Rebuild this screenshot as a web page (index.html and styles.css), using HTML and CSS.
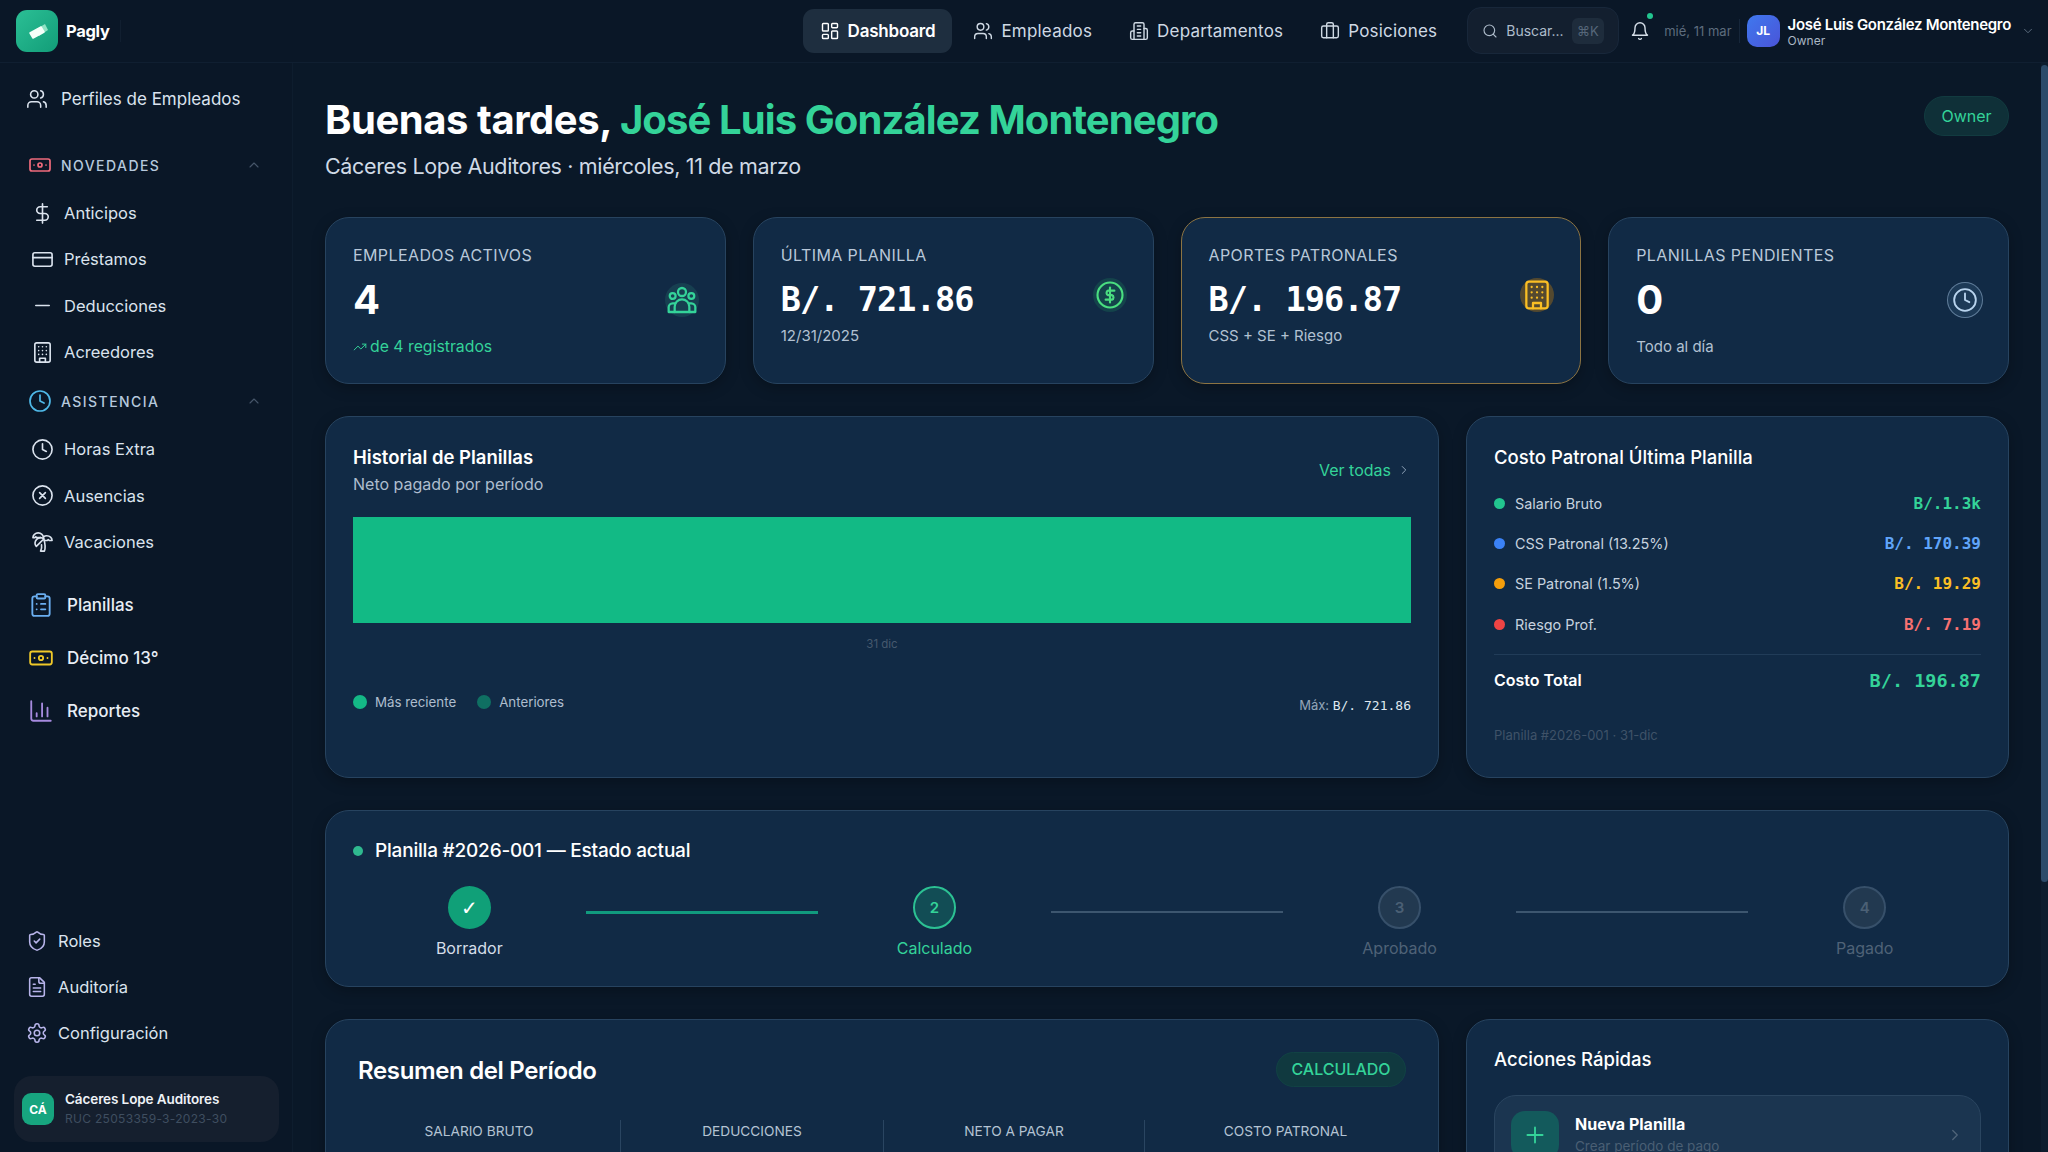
FILE: index.html
```html
<!DOCTYPE html>
<html lang="es">
<head>
  <meta charset="UTF-8" />
  <title>Pagly - Dashboard</title>
  <link rel="stylesheet" href="styles.css">
</head>
<body>
  <svg class="sprite" xmlns="http://www.w3.org/2000/svg">
    <symbol id="i-users" viewBox="0 0 24 24"><path d="M16 21v-2a4 4 0 0 0-4-4H6a4 4 0 0 0-4 4v2"/><circle cx="9" cy="7" r="4"/><path d="M22 21v-2a4 4 0 0 0-3-3.87"/><path d="M16 3.13a4 4 0 0 1 0 7.75"/></symbol>
    <symbol id="i-money" viewBox="0 0 24 24"><rect x="2" y="6" width="20" height="12" rx="2"/><circle cx="12" cy="12" r="2"/><path d="M6 12h.01M18 12h.01"/></symbol>
    <symbol id="i-up" viewBox="0 0 24 24"><path d="m18 15-6-6-6 6"/></symbol>
    <symbol id="i-down" viewBox="0 0 24 24"><path d="m6 9 6 6 6-6"/></symbol>
    <symbol id="i-right" viewBox="0 0 24 24"><path d="m9 18 6-6-6-6"/></symbol>
    <symbol id="i-dollar" viewBox="0 0 24 24"><path d="M12 2v20"/><path d="M17 5H9.5a3.5 3.5 0 0 0 0 7h5a3.5 3.5 0 0 1 0 7H6"/></symbol>
    <symbol id="i-card" viewBox="0 0 24 24"><rect x="2" y="5" width="20" height="14" rx="2"/><path d="M2 10h20"/></symbol>
    <symbol id="i-minus" viewBox="0 0 24 24"><path d="M5 12h14"/></symbol>
    <symbol id="i-building" viewBox="0 0 24 24"><rect x="4" y="2" width="16" height="20" rx="2"/><path d="M9 22v-4h6v4"/><path d="M8 6h.01M12 6h.01M16 6h.01M8 10h.01M12 10h.01M16 10h.01M8 14h.01M12 14h.01M16 14h.01"/></symbol>
    <symbol id="i-clock" viewBox="0 0 24 24"><circle cx="12" cy="12" r="10"/><path d="M12 6v6l4 2"/></symbol>
    <symbol id="i-x" viewBox="0 0 24 24"><circle cx="12" cy="12" r="10"/><path d="m15 9-6 6M9 9l6 6"/></symbol>
    <symbol id="i-palm" viewBox="0 0 24 24"><path d="M13 8c0-2.76-2.46-5-5.5-5S2 5.24 2 8h2l1-1 1 1h4"/><path d="M13 7.14A5.82 5.82 0 0 1 16.5 6c3.04 0 5.5 2.24 5.5 5h-3l-1-1-1 1h-3"/><path d="M5.89 9.71c-2.15 2.15-2.3 5.47-.35 7.43l4.24-4.25.7-.7.71-.71 2.12-2.12c-1.95-1.96-5.27-1.8-7.42.35"/><path d="M11 15.5c.5 2.5-.17 4.5-1 6.5h4c2-5.5-.5-12-1-14"/></symbol>
    <symbol id="i-clipboard" viewBox="0 0 24 24"><rect x="8" y="2" width="8" height="4" rx="1"/><path d="M16 4h2a2 2 0 0 1 2 2v14a2 2 0 0 1-2 2H6a2 2 0 0 1-2-2V6a2 2 0 0 1 2-2h2"/><path d="M12 11h4M12 16h4M8 11h.01M8 16h.01"/></symbol>
    <symbol id="i-chart" viewBox="0 0 24 24"><path d="M3 3v16a2 2 0 0 0 2 2h16"/><path d="M18 17V9M13 17V5M8 17v-3"/></symbol>
    <symbol id="i-shield" viewBox="0 0 24 24"><path d="M20 13c0 5-3.5 7.5-7.66 8.95a1 1 0 0 1-.67-.01C7.5 20.5 4 18 4 13V6a1 1 0 0 1 1-1c2 0 4.5-1.2 6.24-2.72a1.17 1.17 0 0 1 1.52 0C14.51 3.81 17 5 19 5a1 1 0 0 1 1 1z"/><path d="m9 12 2 2 4-4"/></symbol>
    <symbol id="i-file" viewBox="0 0 24 24"><path d="M15 2H6a2 2 0 0 0-2 2v16a2 2 0 0 0 2 2h12a2 2 0 0 0 2-2V7Z"/><path d="M14 2v4a2 2 0 0 0 2 2h4"/><path d="M10 9H8M16 13H8M16 17H8"/></symbol>
    <symbol id="i-gear" viewBox="0 0 24 24"><path d="M12.22 2h-.44a2 2 0 0 0-2 2v.18a2 2 0 0 1-1 1.73l-.43.25a2 2 0 0 1-2 0l-.15-.08a2 2 0 0 0-2.73.73l-.22.38a2 2 0 0 0 .73 2.73l.15.1a2 2 0 0 1 1 1.72v.51a2 2 0 0 1-1 1.74l-.15.09a2 2 0 0 0-.73 2.73l.22.38a2 2 0 0 0 2.73.73l.15-.08a2 2 0 0 1 2 0l.43.25a2 2 0 0 1 1 1.73V20a2 2 0 0 0 2 2h.44a2 2 0 0 0 2-2v-.18a2 2 0 0 1 1-1.73l.43-.25a2 2 0 0 1 2 0l.15.08a2 2 0 0 0 2.73-.73l.22-.39a2 2 0 0 0-.73-2.73l-.15-.08a2 2 0 0 1-1-1.74v-.5a2 2 0 0 1 1-1.74l.15-.09a2 2 0 0 0 .73-2.73l-.22-.38a2 2 0 0 0-2.73-.73l-.15.08a2 2 0 0 1-2 0l-.43-.25a2 2 0 0 1-1-1.73V4a2 2 0 0 0-2-2z"/><circle cx="12" cy="12" r="3"/></symbol>
    <symbol id="i-dash" viewBox="0 0 24 24"><rect x="3" y="3" width="7" height="9" rx="1"/><rect x="14" y="3" width="7" height="5" rx="1"/><rect x="14" y="12" width="7" height="9" rx="1"/><rect x="3" y="16" width="7" height="5" rx="1"/></symbol>
    <symbol id="i-dept" viewBox="0 0 24 24"><path d="M6 22V4a2 2 0 0 1 2-2h8a2 2 0 0 1 2 2v18Z"/><path d="M6 12H4a2 2 0 0 0-2 2v6a2 2 0 0 0 2 2h2"/><path d="M18 9h2a2 2 0 0 1 2 2v9a2 2 0 0 1-2 2h-2"/><path d="M10 6h4M10 10h4M10 14h4M10 18h4"/></symbol>
    <symbol id="i-case" viewBox="0 0 24 24"><path d="M16 20V4a2 2 0 0 0-2-2h-4a2 2 0 0 0-2 2v16"/><rect x="2" y="6" width="20" height="14" rx="2"/></symbol>
    <symbol id="i-search" viewBox="0 0 24 24"><circle cx="11" cy="11" r="8"/><path d="m21 21-4.3-4.3"/></symbol>
    <symbol id="i-bell" viewBox="0 0 24 24"><path d="M6 8a6 6 0 0 1 12 0c0 7 3 9 3 9H3s3-2 3-9"/><path d="M10.3 21a1.94 1.94 0 0 0 3.4 0"/></symbol>
    <symbol id="i-trend" viewBox="0 0 24 24"><path d="m22 7-8.5 8.5-5-5L2 17"/><path d="M16 7h6v6"/></symbol>
    <symbol id="i-group" viewBox="0 0 24 24"><circle cx="12" cy="6" r="3"/><circle cx="5" cy="9" r="2.2"/><circle cx="19" cy="9" r="2.2"/><path d="M6.5 21v-4a5.5 5.5 0 0 1 11 0v4Z"/><path d="M6.5 21H2v-3.5a3 3 0 0 1 3-3h2M17.5 21H22v-3.5a3 3 0 0 0-3-3h-2"/></symbol>
    <symbol id="i-coin" viewBox="0 0 24 24"><circle cx="12" cy="12" r="10"/><path d="M12 6v12"/><path d="M15.5 8.5H10.5a1.9 1.9 0 0 0 0 3.6h3a1.9 1.9 0 0 1 0 3.6H8.500"/></symbol>
    <symbol id="i-plus" viewBox="0 0 24 24"><path d="M5 12h14M12 5v14"/></symbol>
  </svg>

  <header class="topbar">
    <div class="brand">
      <div class="brand-logo">
        <svg viewBox="0 0 42 42" width="42" height="42">
          <path d="M19 20l10-6 3 6-9 6z" fill="#8fe3c4"/>
          <path d="M14 23l11-6 3 5-11 6z" fill="#f4fff9" stroke="#f4fff9" stroke-width="1.500" stroke-linejoin="round"/>
        </svg>
      </div>
      <span class="brand-name">Pagly</span>
    </div>
    <nav class="topnav">
      <a class="topnav-link active"><svg class="ic ic-20"><use href="#i-dash"/></svg>Dashboard</a>
      <a class="topnav-link"><svg class="ic ic-20"><use href="#i-users"/></svg>Empleados</a>
      <a class="topnav-link"><svg class="ic ic-20"><use href="#i-dept"/></svg>Departamentos</a>
      <a class="topnav-link"><svg class="ic ic-20"><use href="#i-case"/></svg>Posiciones</a>
    </nav>
    <div class="topbar-right">
      <div class="search">
        <svg class="ic ic-16"><use href="#i-search"/></svg>
        <span>Buscar...</span>
        <kbd>⌘K</kbd>
      </div>
      <div class="bell">
        <svg class="ic ic-20"><use href="#i-bell"/></svg>
        <span class="bell-dot"></span>
      </div>
      <span class="today">mié, 11 mar</span>
      <div class="user">
        <div class="user-avatar">JL</div>
        <div class="user-info">
          <div class="user-name">José Luis González Montenegro</div>
          <div class="user-role">Owner</div>
        </div>
        <svg class="ic ic-14 dim"><use href="#i-down"/></svg>
      </div>
    </div>
  </header>

  <div class="layout">
    <aside class="sidebar">
      <div class="side-top">
        <a class="side-link side-first"><svg class="ic ic-22"><use href="#i-users"/></svg>Perfiles de Empleados</a>

        <div class="side-section">
          <svg class="ic ic-24 red"><use href="#i-money"/></svg>
          <span>NOVEDADES</span>
          <svg class="ic ic-16 chev"><use href="#i-up"/></svg>
        </div>
        <a class="side-sub"><svg class="ic ic-23"><use href="#i-dollar"/></svg>Anticipos</a>
        <a class="side-sub"><svg class="ic ic-23"><use href="#i-card"/></svg>Préstamos</a>
        <a class="side-sub"><svg class="ic ic-23"><use href="#i-minus"/></svg>Deducciones</a>
        <a class="side-sub"><svg class="ic ic-23"><use href="#i-building"/></svg>Acreedores</a>

        <div class="side-section second">
          <svg class="ic ic-24 sky"><use href="#i-clock"/></svg>
          <span>ASISTENCIA</span>
          <svg class="ic ic-16 chev"><use href="#i-up"/></svg>
        </div>
        <a class="side-sub"><svg class="ic ic-23"><use href="#i-clock"/></svg>Horas Extra</a>
        <a class="side-sub"><svg class="ic ic-23"><use href="#i-x"/></svg>Ausencias</a>
        <a class="side-sub"><svg class="ic ic-23"><use href="#i-palm"/></svg>Vacaciones</a>

        <div class="side-main">
          <a class="side-big"><svg class="ic ic-26 blue"><use href="#i-clipboard"/></svg>Planillas</a>
          <a class="side-big"><svg class="ic ic-26 yellow"><use href="#i-money"/></svg>Décimo 13°</a>
          <a class="side-big"><svg class="ic ic-26 purple"><use href="#i-chart"/></svg>Reportes</a>
        </div>
      </div>

      <div class="side-bottom">
        <a class="side-low"><svg class="ic ic-22 lilac"><use href="#i-shield"/></svg>Roles</a>
        <a class="side-low"><svg class="ic ic-22 lilac"><use href="#i-file"/></svg>Auditoría</a>
        <a class="side-low"><svg class="ic ic-22 lilac"><use href="#i-gear"/></svg>Configuración</a>
        <div class="company">
          <div class="company-avatar">CÁ</div>
          <div>
            <div class="company-name">Cáceres Lope Auditores</div>
            <div class="company-ruc">RUC 25053359-3-2023-30</div>
          </div>
        </div>
      </div>
    </aside>

    <main class="content">
      <div class="page-head">
        <div>
          <h1>Buenas tardes, <span class="accent">José Luis González Montenegro</span></h1>
          <p class="page-sub">Cáceres Lope Auditores · miércoles, 11 de marzo</p>
        </div>
        <span class="owner-pill">Owner</span>
      </div>

      <div class="stack">
        <section class="stats">
          <div class="card stat">
            <div class="stat-label">EMPLEADOS ACTIVOS</div>
            <div class="stat-row">
              <div class="stat-value">4</div>
              <span class="stat-icon s-green"><svg class="ic ic-32"><use href="#i-group"/></svg></span>
            </div>
            <div class="stat-sub green"><svg class="ic ic-14"><use href="#i-trend"/></svg> de 4 registrados</div>
          </div>
          <div class="card stat">
            <div class="stat-label">ÚLTIMA PLANILLA</div>
            <div class="stat-row">
              <div class="stat-value mono">B/. 721.86</div>
              <span class="stat-icon s-lime"><svg class="ic ic-30"><use href="#i-coin"/></svg></span>
            </div>
            <div class="stat-sub">12/31/2025</div>
          </div>
          <div class="card stat stat-gold">
            <div class="stat-label">APORTES PATRONALES</div>
            <div class="stat-row">
              <div class="stat-value mono">B/. 196.87</div>
              <span class="stat-icon s-gold"><svg class="ic ic-32"><use href="#i-building"/></svg></span>
            </div>
            <div class="stat-sub">CSS + SE + Riesgo</div>
          </div>
          <div class="card stat">
            <div class="stat-label">PLANILLAS PENDIENTES</div>
            <div class="stat-row">
              <div class="stat-value">0</div>
              <span class="stat-icon s-slate"><svg class="ic ic-26"><use href="#i-clock"/></svg></span>
            </div>
            <div class="stat-sub">Todo al día</div>
          </div>
        </section>

        <section class="two-col">
          <div class="card chart-card">
            <div class="card-head">
              <div>
                <h2 class="card-title strong">Historial de Planillas</h2>
                <p class="card-sub">Neto pagado por período</p>
              </div>
              <a class="see-all">Ver todas <svg class="ic ic-14"><use href="#i-right"/></svg></a>
            </div>
            <div class="chart-bar"></div>
            <div class="chart-label">31 dic</div>
            <div class="chart-foot">
              <div class="legend">
                <span class="legend-dot recent"></span>Más reciente
                <span class="legend-dot older"></span>Anteriores
              </div>
              <div class="chart-max">Máx: <span class="mono">B/. 721.86</span></div>
            </div>
          </div>

          <div class="card cost-card">
            <h2 class="card-title">Costo Patronal Última Planilla</h2>
            <div class="cost-rows">
              <div class="cost-row"><span class="cost-dot bg-green"></span>Salario Bruto<span class="cost-val mono green">B/.1.3k</span></div>
              <div class="cost-row"><span class="cost-dot bg-blue"></span>CSS Patronal (13.25%)<span class="cost-val mono c-blue">B/. 170.39</span></div>
              <div class="cost-row"><span class="cost-dot bg-amber"></span>SE Patronal (1.5%)<span class="cost-val mono c-amber">B/. 19.29</span></div>
              <div class="cost-row"><span class="cost-dot bg-red"></span>Riesgo Prof.<span class="cost-val mono c-red">B/. 7.19</span></div>
            </div>
            <div class="cost-total">
              <span>Costo Total</span>
              <span class="mono green">B/. 196.87</span>
            </div>
            <div class="cost-note">Planilla #2026-001 · 31-dic</div>
          </div>
        </section>

        <section class="card status-card">
          <div class="status-title"><span class="status-dot"></span>Planilla #2026-001 — Estado actual</div>
          <div class="steps">
            <div class="step done"><div class="step-circle">✓</div><div class="step-label">Borrador</div></div>
            <div class="step-line on"></div>
            <div class="step current"><div class="step-circle">2</div><div class="step-label">Calculado</div></div>
            <div class="step-line"></div>
            <div class="step todo"><div class="step-circle">3</div><div class="step-label">Aprobado</div></div>
            <div class="step-line"></div>
            <div class="step todo"><div class="step-circle">4</div><div class="step-label">Pagado</div></div>
          </div>
        </section>

        <section class="two-col">
          <div class="card summary-card">
            <div class="summary-head">
              <h2>Resumen del Período</h2>
              <span class="summary-pill">CALCULADO</span>
            </div>
            <div class="summary-grid">
              <div class="summary-col">SALARIO BRUTO</div>
              <div class="summary-col">DEDUCCIONES</div>
              <div class="summary-col">NETO A PAGAR</div>
              <div class="summary-col">COSTO PATRONAL</div>
            </div>
          </div>

          <div class="card actions-card">
            <h2 class="card-title">Acciones Rápidas</h2>
            <a class="action">
              <span class="action-icon"><svg class="ic ic-26"><use href="#i-plus"/></svg></span>
              <span class="action-text">
                <span class="action-name">Nueva Planilla</span>
                <span class="action-sub">Crear período de pago</span>
              </span>
              <svg class="ic ic-18 action-arrow"><use href="#i-right"/></svg>
            </a>
          </div>
        </section>
      </div>

      <div class="scroll-track"><div class="scroll-thumb"></div></div>
    </main>
  </div>
</body>
</html>
```

FILE: styles.css
```css
* {
  box-sizing: border-box;
}
html, body {
  height: 100%;
}
body {
  margin: 0;
  background-color: #0a1828;
  color: #fff;
  font-family: 'Inter', 'Liberation Sans', sans-serif;
  font-size: 15px;
  overflow: hidden;
  display: flex;
  flex-direction: column;
}
h1, h2, p {
  margin: 0;
}
.sprite {
  display: none;
}
.mono {
  font-family: 'DejaVu Sans Mono', 'Liberation Mono', monospace;
}

/* icons */
.ic {
  fill: none;
  stroke: currentColor;
  stroke-width: 1.7;
  stroke-linecap: round;
  stroke-linejoin: round;
  flex: none;
}
.ic-14 { width: 14px; height: 14px; }
.ic-16 { width: 16px; height: 16px; }
.ic-18 { width: 18px; height: 18px; }
.ic-20 { width: 20px; height: 20px; }
.ic-22 { width: 22px; height: 22px; }
.ic-23 { width: 23px; height: 23px; }
.ic-24 { width: 24px; height: 24px; }
.ic-26 { width: 26px; height: 26px; }
.ic-30 { width: 30px; height: 30px; }
.ic-32 { width: 32px; height: 32px; }
.red { color: #f06b7c; }
.sky { color: #4fb9e8; }
.blue { color: #6aaef0; }
.yellow { color: #f0c929; }
.purple { color: #a78bdf; }
.lilac { color: #b7b4ea; }
.dim { color: #5b6b7d; }
.green { color: #34d399; }

/* top bar */
.topbar {
  height: 63px;
  flex: none;
  display: flex;
  align-items: center;
  padding: 0 13px 1px 16px;
  background-color: #0a1727;
  border-bottom: 1px solid #101f31;
  position: relative;
}
.brand {
  display: flex;
  align-items: center;
  gap: 8px;
}
.brand-logo {
  width: 42px;
  height: 42px;
  border-radius: 11px;
  background: linear-gradient(135deg, #2bbf95, #129d78);
}
.brand-name {
  font-size: 16.500px;
  line-height: 22px;
  font-weight: 700;
  letter-spacing: -0.3px;
  padding-right: 10px;
  border-right: 1px solid #111f30;
}
.topnav {
  display: flex;
  align-items: center;
  gap: 5px;
  margin-left: 682px;
}
.topnav-link {
  display: flex;
  align-items: center;
  gap: 8px;
  height: 44px;
  padding: 0 16px;
  border-radius: 11px;
  color: #cfd9e4;
  font-size: 17px;
  letter-spacing: 0.2px;
}
.topnav-link.active {
  padding: 0 17px;
  background-color: #1e2e3f;
  color: #fff;
  font-weight: 600;
  letter-spacing: -0.2px;
}
.topbar-right {
  display: flex;
  align-items: center;
  margin-left: auto;
}
.search {
  width: 152px;
  height: 47px;
  display: flex;
  align-items: center;
  gap: 8px;
  padding: 0 14px;
  background-color: #131f2f;
  border: 1px solid #18273a;
  border-radius: 14px;
  font-size: 14px;
  color: #aebccb;
}
.search kbd {
  margin-left: auto;
  width: 37px;
  height: 26px;
  line-height: 26px;
  text-align: center;
  border-radius: 6px;
  background-color: #1e2c3c;
  color: #56677a;
  font-family: 'Inter', sans-serif;
  font-size: 13px;
}
.bell {
  position: relative;
  margin: 0 14px 0 11px;
  display: flex;
  color: #d5dee8;
}
.bell-dot {
  position: absolute;
  right: -3px;
  top: -8px;
  width: 6px;
  height: 6px;
  border-radius: 50%;
  background-color: #22c58f;
}
.today {
  font-size: 13px;
  color: #5d6c7d;
  padding-right: 7px;
  margin-right: 7px;
  border-right: 1px solid #16263a;
  line-height: 24px;
}
.user {
  display: flex;
  align-items: center;
  gap: 8px;
  color: #fff;
}
.user-avatar {
  width: 33px;
  height: 32px;
  border-radius: 10px;
  background: linear-gradient(135deg, #3f78ee, #4a54d8);
  display: flex;
  align-items: center;
  justify-content: center;
  font-size: 12px;
  font-weight: 700;
}
.user-name {
  font-size: 15px;
  font-weight: 600;
  line-height: 19px;
  letter-spacing: -0.3px;
}
.user-role {
  font-size: 12px;
  line-height: 13px;
  color: #aab7c5;
}
.user .ic {
  margin-left: 2px;
}

/* layout */
.layout {
  flex: 1;
  min-height: 0;
  display: flex;
}
.sidebar {
  width: 293px;
  flex: none;
  display: flex;
  flex-direction: column;
  justify-content: space-between;
  background-color: #0a1727;
  border-right: 1px solid #0e1d2e;
  padding: 13px 0 10px;
  color: #dbe3ee;
}
.side-link, .side-sub, .side-big, .side-low, .side-section {
  display: flex;
  align-items: center;
}
.side-link {
  height: 46px;
  padding-left: 26px;
  gap: 13px;
  font-size: 17px;
}
.side-section {
  height: 46px;
  margin-top: 20px;
  margin-bottom: 2px;
  padding-left: 28px;
  gap: 9px;
  font-size: 14px;
  font-weight: 500;
  letter-spacing: 1.45px;
  color: #b6c9dd;
}
.side-section.second {
  margin-top: 3px;
}
.side-section .chev {
  margin-left: auto;
  margin-right: 30px;
  color: #46566a;
}
.side-sub {
  height: 46.3px;
  padding-left: 31px;
  gap: 10px;
  font-size: 16.500px;
}
.side-main {
  margin-top: 13px;
}
.side-big {
  height: 53px;
  padding-left: 28px;
  gap: 13px;
  font-size: 17px;
  font-weight: 500;
  color: #e8eef5;
}
.side-low {
  height: 46px;
  padding-left: 26px;
  gap: 10px;
  font-size: 16.500px;
}
.company {
  display: flex;
  align-items: center;
  gap: 11px;
  height: 66px;
  margin: 20px 14px 0;
  width: 265px;
  padding: 0 8px;
  background-color: #151f2e;
  border-radius: 18px;
}
.company-avatar {
  width: 32px;
  height: 32px;
  border-radius: 9px;
  background-color: #17a57f;
  color: #fff;
  font-size: 12px;
  font-weight: 700;
  display: flex;
  align-items: center;
  justify-content: center;
}
.company-name {
  font-size: 13.500px;
  font-weight: 600;
  line-height: 20px;
  letter-spacing: -0.1px;
  color: #eef2f7;
}
.company-ruc {
  font-size: 12px;
  line-height: 20px;
  color: #3f4e60;
  letter-spacing: 0.3px;
}

/* main */
.content {
  flex: 1;
  min-width: 0;
  position: relative;
  overflow: hidden;
  padding: 32px 39px 0 32px;
  background-color: #0a1828;
}
.scroll-track {
  position: absolute;
  top: 0;
  right: 0;
  bottom: 0;
  width: 7px;
  background-color: #0d1d2e;
}
.scroll-thumb {
  height: 817px;
  margin-top: 2px;
  border-radius: 4px;
  background-color: #2c4b6a;
}
.page-head {
  display: flex;
  justify-content: space-between;
  align-items: flex-start;
  margin-bottom: 36px;
}
h1 {
  margin-top: 1px;
  margin-bottom: -1px;
  font-size: 40px;
  line-height: 48px;
  font-weight: 700;
  letter-spacing: -0.45px;
}
.accent {
  color: #34d399;
  letter-spacing: -0.9px;
}
.page-sub {
  margin-top: 8px;
  font-size: 21.500px;
  line-height: 30px;
  color: #d0dae6;
  letter-spacing: -0.35px;
}
.owner-pill {
  margin-top: 1px;
  width: 85px;
  height: 40px;
  line-height: 38px;
  text-align: center;
  border-radius: 20px;
  background-color: #0f3038;
  border: 1px solid #123b40;
  color: #34d399;
  font-size: 16px;
}
.stack {
  display: flex;
  flex-direction: column;
  gap: 32px;
}
.card {
  background-color: #112a45;
  border: 1px solid #27435f;
  border-radius: 24px;
  box-shadow: 0 4px 14px rgba(0, 0, 0, 0.25);
}

/* stat cards */
.stats {
  display: grid;
  grid-template-columns: repeat(4, 1fr);
  gap: 27px;
}
.stat {
  height: 167px;
  padding: 26px 26px 0 27px;
}
.stat-gold {
  border-color: #8c7443;
}
.stat-label {
  font-size: 16px;
  line-height: 22px;
  color: #b9c8d9;
  letter-spacing: 0.4px;
}
.stat-row {
  display: flex;
  align-items: center;
  justify-content: space-between;
  margin-top: 10px;
}
.stat-value {
  font-size: 40px;
  line-height: 48px;
  font-weight: 700;
}
.stat-value.mono {
  font-size: 33.500px;
  letter-spacing: -0.9px;
  line-height: 37px;
  margin-top: 5px;
  margin-bottom: -5px;
}
.stat-sub {
  margin-top: 13px;
  font-size: 15px;
  line-height: 20px;
  color: #b2c1d2;
  display: flex;
  align-items: center;
  gap: 3px;
}
.stat-sub.green {
  color: #34d399;
  font-size: 15.800px;
}
.stat-icon {
  width: 34px;
  height: 34px;
  border-radius: 50%;
  display: flex;
  align-items: center;
  justify-content: center;
}
.s-green { color: #34d399; background-color: #173f50; }
.s-lime { color: #4ade80; background-color: #14434b; }
.s-gold { color: #fbbf24; background-color: #54492f; }
.s-slate { color: #b9d4ee; background-color: #1d3a57; box-shadow: 0 0 0 1px #5f7c99; }

/* cards row */
.two-col {
  display: grid;
  grid-template-columns: 1114px 1fr;
  gap: 27px;
}
.card-head {
  display: flex;
  justify-content: space-between;
  align-items: center;
}
.card-title {
  font-size: 18.500px;
  line-height: 26px;
  font-weight: 500;
}
.card-title.strong {
  font-weight: 600;
}
.card-sub {
  margin-top: 3px;
  font-size: 16px;
  line-height: 22px;
  color: #aebdce;
}
.see-all {
  display: flex;
  align-items: center;
  gap: 6px;
  color: #34d399;
  font-size: 16px;
}
.see-all .ic {
  color: #8fa3b8;
}
.chart-card {
  height: 362px;
  padding: 27px;
}
.chart-bar {
  height: 106px;
  margin-top: 22px;
  background-color: #12ba85;
}
.chart-label {
  margin-top: 13px;
  text-align: center;
  font-size: 11.500px;
  line-height: 16px;
  color: #46596e;
}
.chart-foot {
  margin-top: 40px;
  height: 25px;
  display: flex;
  justify-content: space-between;
}
.legend {
  display: flex;
  align-items: center;
  height: 20px;
  gap: 8px;
  font-size: 13.300px;
  color: #aebdce;
}
.legend-dot {
  width: 14px;
  height: 14px;
  border-radius: 50%;
}
.legend-dot.recent { background-color: #14b886; }
.legend-dot.older { background-color: #0f6f62; margin-left: 13px; }
.chart-max {
  align-self: flex-end;
  font-size: 13px;
  line-height: 22px;
  color: #93a5b8;
}
.chart-max .mono {
  color: #dfe7ef;
  font-size: 13px;
}
.cost-card {
  height: 362px;
  padding: 27px;
}
.cost-rows {
  margin-top: 13px;
  padding-bottom: 10px;
  border-bottom: 1px solid #213c58;
}
.cost-row {
  height: 40.300px;
  display: flex;
  align-items: center;
  gap: 10px;
  font-size: 14.400px;
  color: #c6d2df;
}
.cost-dot {
  width: 11px;
  height: 11px;
  border-radius: 50%;
}
.bg-green { background-color: #22c58f; }
.bg-blue { background-color: #3b82f6; }
.bg-amber { background-color: #f59e0b; }
.bg-red { background-color: #ef4444; }
.c-blue { color: #60a5fa; }
.c-amber { color: #fbbf24; }
.c-red { color: #f87171; }
.cost-val {
  margin-left: auto;
  font-size: 16px;
  font-weight: 700;
}
.cost-total {
  margin-top: 12px;
  display: flex;
  justify-content: space-between;
  align-items: center;
  height: 26px;
  font-size: 16px;
  font-weight: 600;
}
.cost-total .mono {
  font-size: 18.500px;
  font-weight: 700;
}
.cost-note {
  margin-top: 33px;
  font-size: 13px;
  line-height: 18px;
  color: #3f5268;
}

/* stepper */
.status-card {
  height: 177px;
  padding: 27px;
}
.status-title {
  display: flex;
  align-items: center;
  gap: 12px;
  font-size: 19px;
  line-height: 26px;
  font-weight: 500;
  letter-spacing: -0.2px;
}
.status-dot {
  width: 10px;
  height: 10px;
  border-radius: 50%;
  background-color: #2fb98f;
}
.steps {
  margin-top: 22px;
  display: grid;
  grid-template-columns: repeat(7, 1fr);
}
.step {
  display: flex;
  flex-direction: column;
  align-items: center;
}
.step-circle {
  width: 43px;
  height: 43px;
  border-radius: 50%;
  display: flex;
  align-items: center;
  justify-content: center;
  font-size: 15px;
  font-weight: 600;
}
.step-label {
  margin-top: 8px;
  font-size: 16px;
  line-height: 22px;
}
.done .step-circle {
  background-color: #10a078;
  font-size: 20px;
  font-family: 'DejaVu Sans', sans-serif;
}
.done .step-label {
  color: #d5dfe9;
}
.current .step-circle {
  background-color: #124d55;
  border: 2px solid #2cc193;
  color: #34d399;
}
.current .step-label {
  color: #34d399;
}
.todo .step-circle {
  background-color: #223950;
  border: 2px solid #37506a;
  color: #4b6075;
}
.todo .step-label {
  color: #4f6277;
}
.step-line {
  height: 2px;
  margin-top: 25px;
  background-color: #3d566f;
}
.step-line.on {
  height: 3px;
  background-color: #119a7e;
}

/* summary */
.summary-card {
  height: 300px;
  padding: 32px 32px 0 32px;
}
.summary-head {
  display: flex;
  justify-content: space-between;
  align-items: center;
}
.summary-head h2 {
  margin-top: 2px;
  font-size: 24px;
  font-weight: 600;
  letter-spacing: -0.35px;
}
.summary-pill {
  width: 130px;
  height: 35px;
  line-height: 33px;
  text-align: center;
  border-radius: 18px;
  background-color: #10393f;
  border: 1px solid #114244;
  color: #34d399;
  font-size: 16px;
  font-weight: 500;
}
.summary-grid {
  margin: 33px -21px 0 -20px;
  display: grid;
  grid-template-columns: 282px 263px 261px 282px;
}
.summary-col {
  height: 120px;
  text-align: center;
  font-size: 13.700px;
  line-height: 22px;
  color: #b4c3d3;
  border-left: 1px solid #2a4561;
}
.summary-col:first-child {
  border-left: none;
}
.actions-card {
  height: 300px;
  padding: 26px 27px;
}
.action {
  margin-top: 23px;
  display: flex;
  align-items: center;
  gap: 16px;
  height: 80px;
  padding: 0 16px;
  background-color: #1b3550;
  border: 1px solid #2a4560;
  border-radius: 22px;
}
.action-icon {
  width: 48px;
  height: 48px;
  border-radius: 14px;
  background-color: #135a5c;
  color: #34d399;
  display: flex;
  align-items: center;
  justify-content: center;
}
.action-text {
  display: flex;
  flex-direction: column;
}
.action-name {
  font-size: 16px;
  font-weight: 700;
  line-height: 20px;
}
.action-sub {
  margin-top: 2px;
  font-size: 13.500px;
  line-height: 20px;
  color: #4a5f74;
}
.action-arrow {
  margin-left: auto;
  color: #4f6479;
}
```
